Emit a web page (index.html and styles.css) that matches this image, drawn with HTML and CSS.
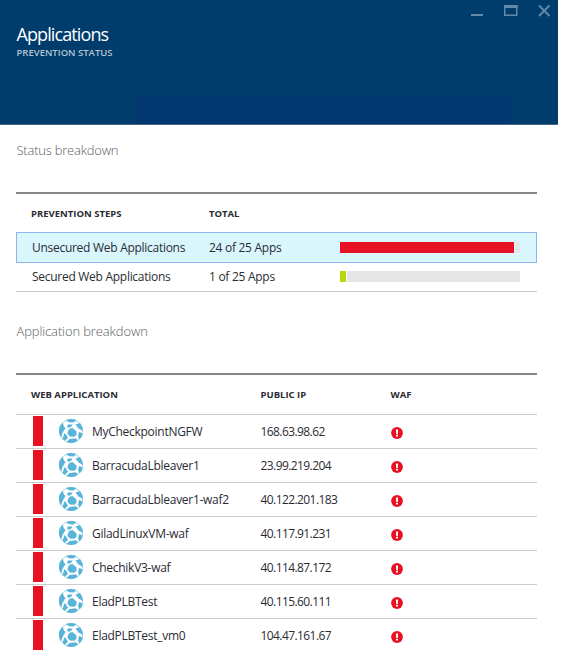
FILE: index.html
```html
<!DOCTYPE html>
<html lang="en">
<head>
<meta charset="utf-8">
<title>Applications</title>
<link rel="stylesheet" href="styles.css">
</head>
<body>
<svg class="defs" width="0" height="0" aria-hidden="true">
  <symbol id="globe" viewBox="0 0 24 24">
    <g fill="#59b4d9">
      <path d="M9 12L10.500 9.800L13.500 9L17.500 12.500L17.500 15.500L15.500 17.800L11 17.500L8.500 15z"/>
      <path d="M7 1.200Q12-1 17.500 1.300L14.500 3.500L10 3.200z"/>
      <path d="M16.500 5.500L21 4Q24 8 24 12L19.500 9.500z"/>
      <path d="M20 13L23.900 14.500Q23 18.500 20.500 20.500L19 17.500z"/>
      <path d="M3.500 3.500L5 7.500L6.500 9L3.500 14L2 18.500Q-3 10.500 3.500 3.500z"/>
      <path d="M9 5.500L13.500 5.500L12.500 7.500L9.500 9L8 7z"/>
      <path d="M5.500 14L7 15.500L9 18.700L6 21.800L3.500 20z"/>
      <path d="M10.500 20L17 19.200L19 21.800Q14 25.500 7.500 23z"/>
    </g>
    <circle cx="12" cy="12" r="11.600" fill="none" stroke="#59b4d9" stroke-width=".8" opacity=".65"/>
  </symbol>
  <symbol id="alert" viewBox="0 0 12 12">
    <circle cx="6" cy="6" r="5.900" fill="#e81123"/>
    <path d="M4.900 2.500h2.200l-.3 4.400H5.200zM5 7.700h2v1.700H5z" fill="#fff"/>
  </symbol>
</svg>
<div class="blade">
  <header class="head">
    <div class="controls">
      <svg width="84" height="18" viewBox="0 0 84 18" fill="none" stroke="#6389a7">
        <path d="M1 15h12" stroke-width="2"/>
        <path d="M34.700 5v10.300h12.100V5" stroke-width="1.500"/>
        <path d="M34 6.500h13.500" stroke-width="3"/>
        <path d="M69 5.500l10.500 10.500M79.500 5.500L69 16" stroke-width="1.900"/>
      </svg>
    </div>
    <h1>Applications</h1>
    <p>PREVENTION STATUS</p>
    <div class="band"></div>
  </header>
  <main>
    <h2 class="s1">Status breakdown</h2>
    <section class="table status">
      <div class="row th"><span class="c1">PREVENTION STEPS</span><span class="c2">TOTAL</span></div>
      <div class="row selected"><span class="c1">Unsecured Web Applications</span><span class="c2">24 of 25 Apps</span><div class="meter"><i class="red"></i><i class="rest"></i></div></div>
      <div class="row second"><span class="c1">Secured Web Applications</span><span class="c2">1 of 25 Apps</span><div class="meter"><i class="green"></i><i class="rest"></i></div></div>
    </section>
    <h2 class="s2">Application breakdown</h2>
    <section class="table apps">
      <div class="row th"><span class="name">WEB APPLICATION</span><span class="ip">PUBLIC IP</span><span>WAF</span></div>
      <div class="row"><i class="flag"></i><svg class="globe"><use href="#globe"/></svg><span class="name">MyCheckpointNGFW</span><span class="ip">168.63.98.62</span><svg class="alert"><use href="#alert"/></svg></div>
      <div class="row"><i class="flag"></i><svg class="globe"><use href="#globe"/></svg><span class="name">BarracudaLbleaver1</span><span class="ip">23.99.219.204</span><svg class="alert"><use href="#alert"/></svg></div>
      <div class="row"><i class="flag"></i><svg class="globe"><use href="#globe"/></svg><span class="name">BarracudaLbleaver1-waf2</span><span class="ip">40.122.201.183</span><svg class="alert"><use href="#alert"/></svg></div>
      <div class="row"><i class="flag"></i><svg class="globe"><use href="#globe"/></svg><span class="name">GiladLinuxVM-waf</span><span class="ip">40.117.91.231</span><svg class="alert"><use href="#alert"/></svg></div>
      <div class="row"><i class="flag"></i><svg class="globe"><use href="#globe"/></svg><span class="name">ChechikV3-waf</span><span class="ip">40.114.87.172</span><svg class="alert"><use href="#alert"/></svg></div>
      <div class="row"><i class="flag"></i><svg class="globe"><use href="#globe"/></svg><span class="name">EladPLBTest</span><span class="ip">40.115.60.111</span><svg class="alert"><use href="#alert"/></svg></div>
      <div class="row"><i class="flag"></i><svg class="globe"><use href="#globe"/></svg><span class="name">EladPLBTest_vm0</span><span class="ip">104.47.161.67</span><svg class="alert"><use href="#alert"/></svg></div>
    </section>
  </main>
</div>
</body>
</html>
```

FILE: styles.css
```css
* { box-sizing: border-box; }
body { margin: 0; background: #fff; font-family: "Open Sans", "Noto Sans", sans-serif; color: #2b2b33; overflow: hidden; }
.defs { display: block; height: 0; }
.blade { width: 558px; height: 655px; }
.head { height: 125px; background: #003c6c; border-bottom: 1px solid #41668c; color: #fff; display: flex; flex-direction: column; }
.controls { height: 23px; padding-left: 470px; }
.controls svg { display: block; }
h1, h2, p { margin: 0; font-weight: 400; white-space: nowrap; }
h1 { padding-left: 16.500px; font-size: 18px; line-height: 22px; letter-spacing: -0.9px; }
.head p { padding-left: 16.500px; font-size: 9.500px; line-height: 16px; font-weight: 600; color: #b3c4d3; letter-spacing: 0; }
.band { width: 375px; height: 28px; margin: auto 0 0 136px; background: #02386f; }
main { padding: 0 0 0 16px; }
h2 { font-size: 13px; font-weight: 300; color: #5c5c62; line-height: 20px; letter-spacing: -0.22px; padding-left: .5px; }
.s1 { margin-top: 15px; }
.s2 { margin-top: 29px; letter-spacing: -0.12px; }
.table { width: 521px; margin-top: 32px; border-top: 2px solid #85858c; }
.row { display: flex; align-items: center; font-size: 12px; font-weight: 500; white-space: nowrap; letter-spacing: -0.28px; }
.th { height: 38px; font-size: 9.500px; font-weight: 700; letter-spacing: 0; padding-left: 15px; }
.status .c1 { width: 177px; }
.status .th .c1 { width: 178px; }
.status .c2 { width: 131px; }
.status .selected { height: 31px; background: #d9f6fd; border: 1px solid #8fb4f0; padding-left: 15px; }
.status .second { height: 29px; border-bottom: 1px solid #c8c8cc; padding: 0 0 1px 16px; }
.meter { width: 180px; height: 11px; display: flex; gap: 1px; }
.red { width: 174px; background: #e81123; }
.green { width: 6px; background: #b8d80b; }
.rest { flex: 1; background: #e5e5e5; }
.apps .row { height: 34px; border-bottom: 1px solid #ccc; }
.apps .row:last-child { border-bottom-color: transparent; }
.apps .th { height: 40px; }
.apps .th .name { width: 229.500px; }
.flag { width: 10px; height: 30px; margin: 0 0 1px 17px; background: #e81123; }
.globe { width: 24px; height: 24px; margin: 0 0 1px 16px; }
.apps .name { width: 168.500px; }
.globe + .name { margin-left: 9px; }
.apps .ip { width: 130px; }
.apps .row:not(.th) .ip { letter-spacing: -0.58px; font-weight: 400; }
.alert { width: 12px; height: 12px; margin-top: 3px; }
```
